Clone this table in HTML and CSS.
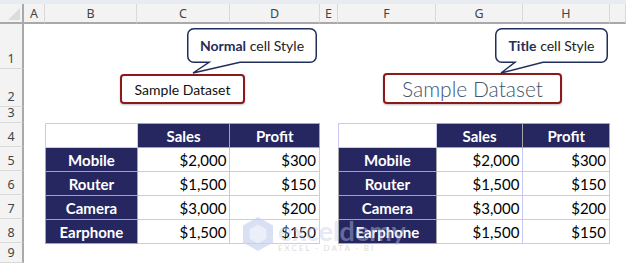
FILE: index.html
```html
<!DOCTYPE html>
<html lang="en">
<head>
    <meta charset="UTF-8">
    <title>Cell Styles</title>
    <link rel="stylesheet" href="styles.css">
</head>
<body>
    <!-- franja superior -->
    <div class="top-strip"></div>

    <div class="sheet">
        <!-- encabezados de columna -->
        <div class="corner"><span class="corner-tri"></span></div>
        <div class="col-head">A</div>
        <div class="col-head">B</div>
        <div class="col-head">C</div>
        <div class="col-head">D</div>
        <div class="col-head">E</div>
        <div class="col-head">F</div>
        <div class="col-head">G</div>
        <div class="col-head">H</div>
        <div class="col-head"></div>

        <!-- encabezados de fila -->
        <div class="row-head">1</div>
        <div class="row-head">2</div>
        <div class="row-head">3</div>
        <div class="row-head">4</div>
        <div class="row-head">5</div>
        <div class="row-head">6</div>
        <div class="row-head">7</div>
        <div class="row-head">8</div>
        <div class="row-head">9</div>

        <!-- titulos -->
        <div class="title-cell left-title">
            <div class="sample-box normal">Sample Dataset</div>
        </div>
        <div class="title-cell right-title">
            <div class="sample-box title">Sample Dataset</div>
        </div>

        <!-- tabla izquierda -->
        <table class="data left-table">
            <tr>
                <td class="blank"></td>
                <th>Sales</th>
                <th>Profit</th>
            </tr>
            <tr><th>Mobile</th><td>$2,000</td><td>$300</td></tr>
            <tr><th>Router</th><td>$1,500</td><td>$150</td></tr>
            <tr><th>Camera</th><td>$3,000</td><td>$200</td></tr>
            <tr><th>Earphone</th><td>$1,500</td><td>$150</td></tr>
        </table>

        <!-- tabla derecha -->
        <table class="data right-table">
            <tr>
                <td class="blank"></td>
                <th>Sales</th>
                <th>Profit</th>
            </tr>
            <tr><th>Mobile</th><td>$2,000</td><td>$300</td></tr>
            <tr><th>Router</th><td>$1,500</td><td>$150</td></tr>
            <tr><th>Camera</th><td>$3,000</td><td>$200</td></tr>
            <tr><th>Earphone</th><td>$1,500</td><td>$150</td></tr>
        </table>

        <!-- globos de texto -->
        <div class="callout callout-normal">
            <svg class="bubble" width="130" height="46" viewBox="0 0 130 46">
                <path d="M6.75,0.75 H123.25 A6,6 0 0 1 129.25,6.75 V28.25 A6,6 0 0 1 123.25,34.25 H53 L6,45 L22,34.25 H6.75 A6,6 0 0 1 0.75,28.25 V6.75 A6,6 0 0 1 6.75,0.75 Z" />
            </svg>
            <div class="callout-text"><span><b>Normal</b> cell Style</span></div>
        </div>
        <div class="callout callout-title">
            <svg class="bubble" width="113" height="46" viewBox="0 0 113 46">
                <path d="M6.75,0.75 H106.25 A6,6 0 0 1 112.25,6.75 V28.25 A6,6 0 0 1 106.25,34.25 H48 L6,45 L20,34.25 H6.75 A6,6 0 0 1 0.75,28.25 V6.75 A6,6 0 0 1 6.75,0.75 Z" />
            </svg>
            <div class="callout-text"><span><b>Title</b> cell Style</span></div>
        </div>

        <!-- marca de agua -->
        <div class="watermark">
            <svg width="32" height="36" viewBox="0 0 34 38">
                <path d="M17 1 L33 10 V28 L17 37 L1 28 V10 Z" fill="#c9d4ee" />
                <path d="M17 9 L26 14 V24 L17 29 L8 24 V14 Z" fill="#e3e9f7" />
            </svg>
            <div class="wm-text">
                <span class="wm-name">exceldemy</span>
                <span class="wm-sub">EXCEL · DATA · BI</span>
            </div>
        </div>
    </div>
</body>
</html>
```

FILE: styles.css
```css
body {
    margin: 0;
    background: #ffffff;
    font-family: 'Lato', 'Liberation Sans', sans-serif;
}

.top-strip {
    height: 4px;
    background-color: #e8ebef;
}

.sheet {
    position: relative;
    display: grid;
    grid-template-columns: 24px 21px 92px 93px 90px 18px 98px 87px 87px 1fr;
    grid-template-rows: 20px 45px 38px 16px 24px 24px 24px 24px 24px 20px;
    height: 259px;
    overflow: hidden;
}

.corner {
    background-color: #f3f3f3;
    border-bottom: 2px solid #a9a9a9;
    border-right: 2px solid #a9a9a9;
    position: relative;
}

.corner-tri {
    position: absolute;
    right: 2px;
    bottom: 2px;
    width: 0;
    height: 0;
    border-left: 12px solid transparent;
    border-bottom: 12px solid #dcdcdc;
}

.col-head {
    background-color: #f3f3f3;
    border-bottom: 2px solid #a9a9a9;
    border-right: 1px solid #d9d9d9;
    font-family: 'Noto Sans', 'Open Sans', sans-serif;
    font-size: 12.5px;
    color: #444444;
    display: flex;
    justify-content: center;
    align-items: center;
}

.row-head {
    grid-column: 1;
    background-color: #f3f3f3;
    border-right: 2px solid #a9a9a9;
    border-bottom: 1px solid #d9d9d9;
    font-family: 'Noto Sans', 'Open Sans', sans-serif;
    font-size: 12.5px;
    color: #444444;
    display: flex;
    justify-content: center;
    align-items: flex-end;
    line-height: 18px;
}

.title-cell {
    display: flex;
    justify-content: center;
    align-items: flex-end;
    padding-bottom: 3px;
}

.left-title {
    grid-area: 3 / 3 / 4 / 6;
}

.right-title {
    grid-area: 3 / 7 / 4 / 10;
    padding-right: 3px;
}

.sample-box {
    border: 2px solid #8b1b1b;
    border-radius: 4px;
    box-shadow: 0 1px 2px rgba(0, 0, 0, 0.25);
    display: flex;
    justify-content: center;
    align-items: center;
    background: #ffffff;
}

.sample-box.normal {
    width: 121px;
    height: 26px;
    font-size: 14px;
    color: #111111;
}

.sample-box.title {
    width: 175px;
    height: 27px;
    font-size: 21px;
    font-weight: 300;
    color: #44546a;
}

/* tablas */
.data {
    border-collapse: collapse;
    table-layout: fixed;
    font-size: 15px;
    align-self: start;
}

.left-table {
    grid-area: 5 / 3 / 10 / 6;
}

.right-table {
    grid-area: 5 / 7 / 10 / 10;
}

.data td,
.data th {
    height: 24px;
    padding: 0 3px;
    box-sizing: border-box;
}

.data td {
    border: 1px solid #c9c9f3;
    text-align: right;
    color: #000000;
}

.data th {
    background-color: #262660;
    color: #ffffff;
    font-weight: bold;
    text-align: center;
    border: 1px solid #a6a6a6;
}

.data td.blank {
    border: 1px solid #c9c9f3;
}

.left-table tr > :nth-child(1) { width: 92px; }
.left-table tr > :nth-child(2) { width: 93px; }
.left-table tr > :nth-child(3) { width: 90px; }

.right-table tr > :nth-child(1) { width: 98px; }
.right-table tr > :nth-child(2) { width: 87px; }
.right-table tr > :nth-child(3) { width: 87px; }

/* globos */
.callout {
    position: absolute;
    height: 46px;
}

.callout-normal {
    left: 187px;
    top: 24px;
    width: 130px;
}

.callout-title {
    left: 495px;
    top: 24px;
    width: 113px;
}

.bubble {
    position: absolute;
    top: 0;
    left: 0;
}

.bubble path {
    fill: #ffffff;
    stroke: #1f2e5a;
    stroke-width: 1.5;
}

.callout-text {
    position: relative;
    height: 35px;
    display: flex;
    justify-content: center;
    align-items: center;
    font-size: 14px;
    color: #222222;
}

.callout-text b {
    color: #1f2e5a;
}

/* marca de agua */
.watermark {
    position: absolute;
    left: 242px;
    top: 212px;
    display: flex;
    align-items: center;
    gap: 4px;
    opacity: 0.7;
    pointer-events: none;
}

.wm-text {
    display: flex;
    flex-direction: column;
    line-height: 1;
}

.wm-name {
    font-size: 27px;
    font-weight: bold;
    color: rgba(190, 204, 235, 0.6);
}

.wm-sub {
    font-size: 8px;
    letter-spacing: 2px;
    color: rgba(170, 170, 170, 0.6);
}
```
